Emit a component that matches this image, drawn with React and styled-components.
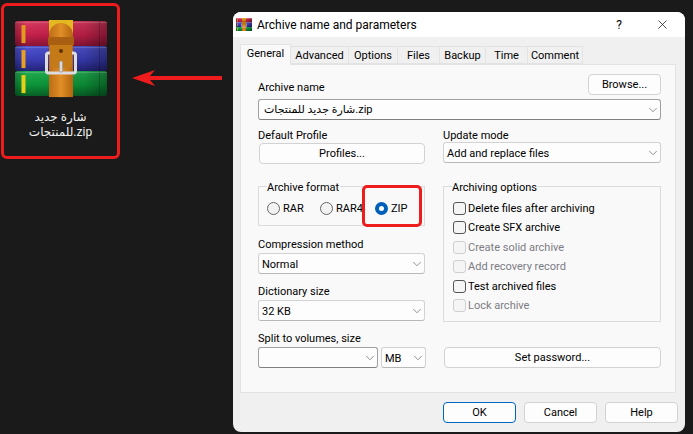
import styled, { createGlobalStyle } from 'styled-components';
import { ChevronDown, X } from 'lucide-react';

const GlobalStyle = createGlobalStyle`
  html, body {
    margin: 0;
    padding: 0;
    background: #1a1a1a;
    overflow: hidden;
  }
`;

const TABS = [
  ['General', 51],
  ['Advanced', 58],
  ['Options', 49],
  ['Files', 42],
  ['Backup', 46],
  ['Time', 42],
  ['Comment', 55],
];

const OPTIONS = [
  ['Delete files after archiving', false],
  ['Create SFX archive', false],
  ['Create solid archive', true],
  ['Add recovery record', true],
  ['Test archived files', false],
  ['Lock archive', true],
];

const Book = ({ y, fill, mark }) => (
  <g>
    <rect x="0" y={y} width="92" height="25" rx="3" fill={`url(#${fill})`} />
    <rect x="0" y={y} width="92" height="25" rx="3" fill="url(#edge)" />
    <rect x="0" y={y + 1} width="92" height="1" fill="#fff" opacity="0.18" />
    <rect x="84" y={y} width="1" height="25" fill="#000" opacity="0.2" />
    <rect x="6.5" y={y + 4} width="4" height="18" fill={mark} />
  </g>
);

const WinrarIcon = ({ size }) => (
  <svg width={size} height={size * 0.85} viewBox="0 0 92 78">
    <defs>
      <linearGradient id="red" x1="0" y1="0" x2="0" y2="1">
        <stop offset="0" stopColor="#d83a60" />
        <stop offset="0.55" stopColor="#c4204a" />
        <stop offset="1" stopColor="#8a1436" />
      </linearGradient>
      <linearGradient id="blue" x1="0" y1="0" x2="0" y2="1">
        <stop offset="0" stopColor="#4f54d0" />
        <stop offset="0.55" stopColor="#3a3cb4" />
        <stop offset="1" stopColor="#232378" />
      </linearGradient>
      <linearGradient id="green" x1="0" y1="0" x2="0" y2="1">
        <stop offset="0" stopColor="#22ad50" />
        <stop offset="0.55" stopColor="#0c9438" />
        <stop offset="1" stopColor="#076026" />
      </linearGradient>
      <linearGradient id="edge" x1="0" y1="0" x2="1" y2="0">
        <stop offset="0" stopColor="#000" stopOpacity="0.25" />
        <stop offset="0.12" stopColor="#000" stopOpacity="0" />
        <stop offset="0.75" stopColor="#000" stopOpacity="0.1" />
        <stop offset="1" stopColor="#000" stopOpacity="0.35" />
      </linearGradient>
      <linearGradient id="belt" x1="0" y1="0" x2="1" y2="0">
        <stop offset="0" stopColor="#bd6d16" />
        <stop offset="0.5" stopColor="#e08e26" />
        <stop offset="1" stopColor="#b5660f" />
      </linearGradient>
    </defs>
    <Book y={1} fill="red" mark="#e09a20" />
    <Book y={26} fill="blue" mark="#e8a020" />
    <Book y={51} fill="green" mark="#e8d018" />
    <rect x="34" y="0" width="24" height="77" fill="url(#belt)" />
    <path d="M34 0h24v14c-1-7-6-11-12-11s-11 4-12 11z" fill="#e4b820" />
    <rect x="33" y="17" width="26" height="8" fill="#a85f12" />
    <rect x="31.5" y="33" width="29" height="20" rx="2" fill="none" stroke="#dcdce0" strokeWidth="3" />
    <path d="M35 25h22v20a3 3 0 0 1-3 3H38a3 3 0 0 1-3-3z" fill="#c57a18" />
    <circle cx="46" cy="31" r="2" fill="#5e3208" />
    <rect x="44.3" y="41" width="3.4" height="11" rx="1.4" fill="#d8d8dc" stroke="#777" strokeWidth="0.5" />
  </svg>
);

const Arrow = () => <ChevronDown size={14} strokeWidth={1} color="#444" />;

const App = () => {
  return (
    <Page>
      <GlobalStyle />
      <FileCard>
        <WinrarIcon size={92} />
        <FileName>
          شارة جديد
          <br />
          للمنتجات.zip
        </FileName>
      </FileCard>
      <ArrowIcon width="90" height="16" viewBox="0 0 90 16">
        <path d="M0 8L23 0L18 6H90V10H18L23 16z" fill="#ee1c1c" />
      </ArrowIcon>
      <Dialog>
        <TitleBar>
          <WinrarIcon size={16} />
          <Title>Archive name and parameters</Title>
          <HelpMark>?</HelpMark>
          <X size={15} strokeWidth={1.2} color="#111" />
        </TitleBar>
        <TabRow>
          {TABS.map(([name, width], i) => (
            <Tab key={name} $width={width} $active={i === 0}>
              {name}
            </Tab>
          ))}
        </TabRow>
        <Panel>
          <NameHead>
            <Label>Archive name</Label>
            <Button $width={73}>Browse...</Button>
          </NameHead>
          <Combo $editable $pad={5}>
            <span>شارة جديد للمنتجات.zip</span>
            <Arrow />
          </Combo>
          <Columns>
            <Column>
              <Label>Default Profile</Label>
              <Button $width={166} $indent={1}>Profiles...</Button>
              <Group $top={22} $height={40}>
                <Legend>Archive format</Legend>
                <RadioRow>
                  <RadioOption $width={53}><Radio />RAR</RadioOption>
                  <RadioOption $width={55}><Radio />RAR4</RadioOption>
                  <RadioOption $width={40}><Radio $checked />ZIP</RadioOption>
                </RadioRow>
                <Highlight />
              </Group>
              <Label $top={10}>Compression method</Label>
              <Combo $top={1}>
                <ComboText>Normal</ComboText>
                <Arrow />
              </Combo>
              <Label $top={9}>Dictionary size</Label>
              <Combo $top={1}>
                <ComboText>32 KB</ComboText>
                <Arrow />
              </Combo>
              <Label $top={9}>Split to volumes, size</Label>
              <SplitRow>
                <Combo $editable $top={1} $width={120}>
                  <span />
                  <Arrow />
                </Combo>
                <Combo $top={1} $width={45}>
                  <ComboText>MB</ComboText>
                  <Arrow />
                </Combo>
              </SplitRow>
            </Column>
            <Column>
              <Label>Update mode</Label>
              <Combo $top={-1}>
                <ComboText>Add and replace files</ComboText>
                <Arrow />
              </Combo>
              <Group $top={23} $height={136}>
                <Legend>Archiving options</Legend>
                <CheckList>
                  {OPTIONS.map(([text, disabled]) => (
                    <CheckRow key={text} $disabled={disabled}>
                      <CheckBox $disabled={disabled} />
                      {text}
                    </CheckRow>
                  ))}
                </CheckList>
              </Group>
              <Button $width={217} $indent={1} $top={25}>Set password...</Button>
            </Column>
          </Columns>
        </Panel>
        <Footer>
          <Button $width={73} $primary>OK</Button>
          <Button $width={73}>Cancel</Button>
          <Button $width={73}>Help</Button>
        </Footer>
      </Dialog>
    </Page>
  );
};

const Page = styled.div`
  width: 693px;
  height: 434px;
  box-sizing: border-box;
  padding: 3px 0 0 1px;
  display: flex;
  align-items: flex-start;
  background: #1a1a1a;
  font-family: Roboto, 'DejaVu Sans', sans-serif;
  font-size: 11px;
  color: #000;
`;
const FileCard = styled.div`
  width: 119px;
  height: 156px;
  box-sizing: border-box;
  border: 3px solid #ee1c1c;
  border-radius: 6px;
  padding-top: 14px;
  display: flex;
  flex-direction: column;
  align-items: center;
`;
const FileName = styled.div`
  margin-top: 12px;
  color: #f2f2f2;
  font-size: 12px;
  line-height: 15px;
  text-align: center;
`;
const ArrowIcon = styled.svg`
  flex: none;
  margin: 67px 0 0 12px;
`;
const Dialog = styled.div`
  width: 452px;
  height: 420px;
  margin: 9px 0 0 11px;
  box-sizing: border-box;
  background: #f0f0f0;
  border-radius: 8px;
  overflow: hidden;
  display: flex;
  flex-direction: column;
`;
const TitleBar = styled.div`
  height: 25px;
  flex: none;
  background: #fff;
  padding: 0 15px 0 3px;
  display: flex;
  align-items: center;
`;
const Title = styled.div`
  margin-left: 5px;
  font-size: 12px;
  flex: 1;
`;
const HelpMark = styled.span`
  font-size: 12px;
  margin-right: 33px;
`;
const TabRow = styled.div`
  height: 20px;
  margin: 7px 0 0 7px;
  display: flex;
  align-items: flex-end;
  position: relative;
  z-index: 1;
`;
const Tab = styled.div`
  width: ${(p) => p.$width}px;
  height: ${(p) => (p.$active ? 21 : 18)}px;
  box-sizing: border-box;
  margin-bottom: ${(p) => (p.$active ? -1 : 0)}px;
  padding-bottom: ${(p) => (p.$active ? 3 : 0)}px;
  padding-top: ${(p) => (p.$active ? 0 : 1)}px;
  background: ${(p) => (p.$active ? '#f9f9f9' : '#f0f0f0')};
  border: 1px solid #e3e3e3;
  border-bottom: ${(p) => (p.$active ? 'none' : '1px solid #e3e3e3')};
  border-left: ${(p) => (p.$active ? '1px solid #e3e3e3' : 'none')};
  display: flex;
  align-items: center;
  justify-content: center;
`;
const Panel = styled.div`
  width: 436px;
  height: 329px;
  flex: none;
  margin-left: 7px;
  box-sizing: border-box;
  background: #f9f9f9;
  border: 1px solid #e3e3e3;
  padding: 9px 14px 0 17px;
`;
const NameHead = styled.div`
  display: flex;
  justify-content: space-between;
  align-items: flex-end;
  margin-bottom: 4px;
`;
const Label = styled.div`
  height: 16px;
  line-height: 18px;
  margin-top: ${(p) => p.$top || 0}px;
  white-space: nowrap;
`;
const Button = styled.div`
  width: ${(p) => p.$width}px;
  height: 21px;
  box-sizing: border-box;
  margin-top: ${(p) => p.$top || 0}px;
  margin-left: ${(p) => p.$indent || 0}px;
  background: #fdfdfd;
  border: 1px solid ${(p) => (p.$primary ? '#0067c0' : '#d2d2d2')};
  border-radius: 4px;
  display: flex;
  align-items: center;
  justify-content: center;
`;
const Combo = styled.div`
  width: ${(p) => (p.$width ? `${p.$width}px` : '100%')};
  height: 21px;
  box-sizing: border-box;
  margin-top: ${(p) => p.$top || 0}px;
  padding: 0 0 0 ${(p) => p.$pad || 3}px;
  background: #fdfdfd;
  border: 1px solid ${(p) => (p.$editable ? '#a0a0a0' : '#d2d2d2')};
  border-bottom-color: ${(p) => (p.$editable ? '#808080' : '#b8b8b8')};
  border-radius: 3px;
  display: flex;
  align-items: center;
  justify-content: space-between;
  flex: none;
`;
const ComboText = styled.span`
  padding-top: 1px;
`;
const Columns = styled.div`
  display: grid;
  grid-template-columns: 167px 218px;
  column-gap: 18px;
  margin-top: 7px;
`;
const Column = styled.div`
  display: flex;
  flex-direction: column;
  align-items: flex-start;
`;
const Group = styled.div`
  position: relative;
  width: 100%;
  height: ${(p) => p.$height}px;
  box-sizing: border-box;
  margin-top: ${(p) => p.$top}px;
  border: 1px solid #dcdcdc;
  padding: 0 8px;
`;
const Legend = styled.div`
  width: fit-content;
  height: 16px;
  line-height: 18px;
  margin: -8px 0 0 0;
  padding: 0 1px 0 0;
  background: #f9f9f9;
`;
const RadioRow = styled.div`
  display: flex;
  margin-top: 5px;
`;
const RadioOption = styled.div`
  width: ${(p) => p.$width}px;
  flex: none;
  height: 16px;
  display: flex;
  align-items: center;
  gap: 3px;
`;
const Radio = styled.span`
  width: 13px;
  height: 13px;
  box-sizing: border-box;
  border-radius: 50%;
  flex: none;
  background: ${(p) => (p.$checked ? '#fff' : '#f3f3f3')};
  border: ${(p) => (p.$checked ? '4px solid #005fb8' : '1px solid #666')};
`;
const Highlight = styled.div`
  position: absolute;
  left: 103px;
  top: -2px;
  width: 60px;
  height: 42px;
  box-sizing: border-box;
  border: 3px solid #ee1c1c;
  border-radius: 5px;
`;
const SplitRow = styled.div`
  display: flex;
  gap: 3px;
  width: 168px;
`;
const CheckList = styled.div`
  display: flex;
  flex-direction: column;
  margin-top: 5px;
  gap: 3.5px;
`;
const CheckRow = styled.div`
  height: 16px;
  display: flex;
  align-items: center;
  gap: 2px;
  margin-left: 1px;
  white-space: nowrap;
  color: ${(p) => (p.$disabled ? '#7c7c84' : '#000')};
`;
const CheckBox = styled.span`
  width: 13px;
  height: 13px;
  box-sizing: border-box;
  flex: none;
  border-radius: 3px;
  background: #f5f5f5;
  border: 1px solid ${(p) => (p.$disabled ? '#cfcfcf' : '#555')};
`;
const Footer = styled.div`
  display: flex;
  justify-content: flex-end;
  gap: 8px;
  margin-top: 9px;
  padding-right: 7px;
`;

export default App;
